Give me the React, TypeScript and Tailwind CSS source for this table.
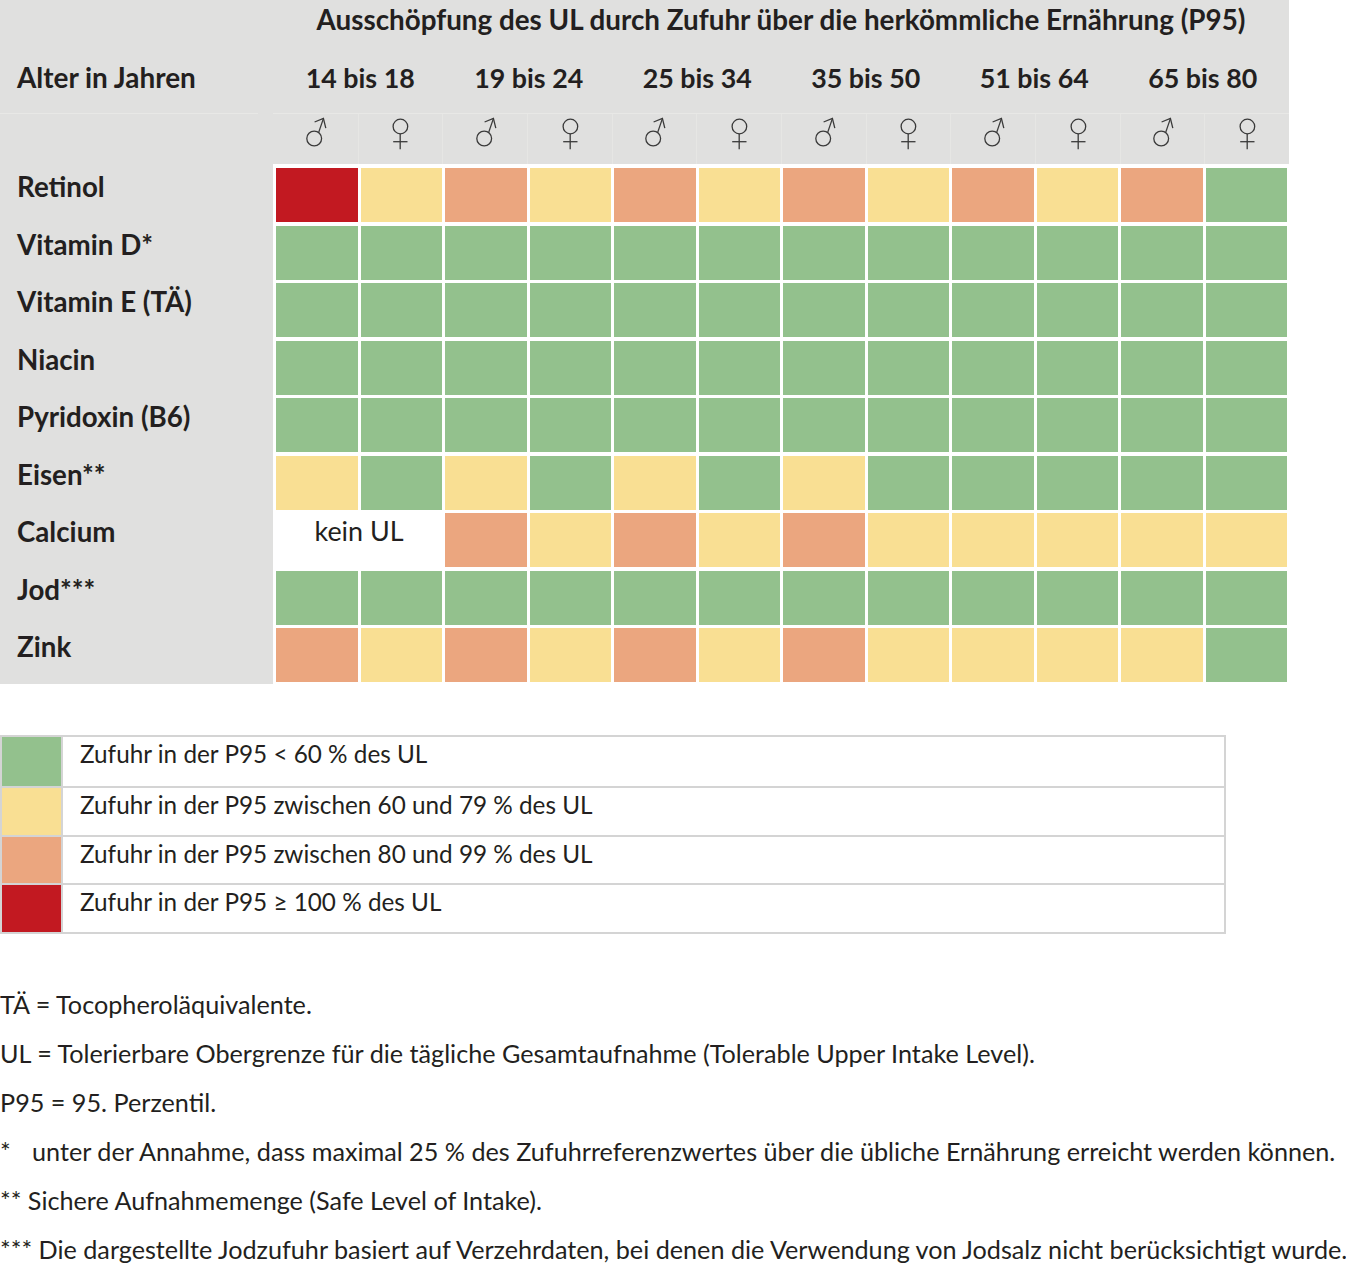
import React from 'react'

type Level = 'G' | 'Y' | 'O' | 'R'

const CELL_BG: Record<Level, string> = {
  G: 'bg-[#93c18d]',
  Y: 'bg-[#f9df93]',
  O: 'bg-[#eba67f]',
  R: 'bg-[#c21921]',
}

const AGES = ['14 bis 18', '19 bis 24', '25 bis 34', '35 bis 50', '51 bis 64', '65 bis 80']

const ROWS: { label: string; cells: Level[]; noUL?: boolean }[] = [
  { label: 'Retinol', cells: ['R', 'Y', 'O', 'Y', 'O', 'Y', 'O', 'Y', 'O', 'Y', 'O', 'G'] },
  { label: 'Vitamin D*', cells: Array(12).fill('G') },
  { label: 'Vitamin E (TÄ)', cells: Array(12).fill('G') },
  { label: 'Niacin', cells: Array(12).fill('G') },
  { label: 'Pyridoxin (B6)', cells: Array(12).fill('G') },
  { label: 'Eisen**', cells: ['Y', 'G', 'Y', 'G', 'Y', 'G', 'Y', 'G', 'G', 'G', 'G', 'G'] },
  { label: 'Calcium', cells: ['O', 'Y', 'O', 'Y', 'O', 'Y', 'Y', 'Y', 'Y', 'Y'], noUL: true },
  { label: 'Jod***', cells: Array(12).fill('G') },
  { label: 'Zink', cells: ['O', 'Y', 'O', 'Y', 'O', 'Y', 'O', 'Y', 'Y', 'Y', 'Y', 'G'] },
]

const LEGEND: { level: Level; text: string }[] = [
  { level: 'G', text: 'Zufuhr in der P95 < 60 % des UL' },
  { level: 'Y', text: 'Zufuhr in der P95 zwischen 60 und 79 % des UL' },
  { level: 'O', text: 'Zufuhr in der P95 zwischen 80 und 99 % des UL' },
  { level: 'R', text: 'Zufuhr in der P95 ≥ 100 % des UL' },
]

function Male() {
  return (
    <svg width="32" height="34" viewBox="0 0 32 34" fill="none" stroke="#3a3a3a" strokeWidth="1.3">
      <circle cx="15.2" cy="21.5" r="7.4" />
      <path d="M19.6 15.6 L24.4 1.6" />
      <path d="M15.6 5 L24.4 1.4 L26.8 11.2" />
    </svg>
  )
}

function Female() {
  return (
    <svg width="32" height="34" viewBox="0 0 32 34" fill="none" stroke="#3a3a3a" strokeWidth="1.3">
      <circle cx="16.4" cy="9.5" r="7.3" />
      <path d="M16.2 16.8 V32.3" />
      <path d="M9.2 24.7 H23.5" />
    </svg>
  )
}

export default function App() {
  return (
    <div className="w-[1346px] bg-white text-[#231f20] [font-family:Lato,sans-serif]">
      {/* header */}
      <div className="flex w-[1289px] h-[164px] bg-[#e0e0df]">
        <div className="w-[273px] flex flex-col">
          <div className="h-[45px]" />
          <div className="h-[68px] flex items-center pl-[17px] pb-[3px] text-[27.9px] font-bold">Alter in Jahren</div>
          <div className="flex-1 border-t border-[#e8e8e6] mr-[15px]" />
        </div>
        <div className="flex-1 flex flex-col">
          <div className="h-[45px] flex items-center justify-center pb-[6px] text-[27.8px] font-bold whitespace-nowrap">
            Ausschöpfung des UL durch Zufuhr über die herkömmliche Ernährung (P95)
          </div>
          <div className="h-[68px] grid grid-cols-6 pl-[3px] pr-[2px] pb-[2px] items-center">
            {AGES.map(a => (
              <div key={a} className="text-center text-[26.8px] font-bold">{a}</div>
            ))}
          </div>
          <div className="flex-1 grid grid-cols-12 border-t border-[#e8e8e6]">
            {AGES.flatMap(a => [
              <div key={a + 'm'} className="flex justify-center pt-[3px] border-l border-[#e6e6e4] first:border-l-0">
                <Male />
              </div>,
              <div key={a + 'f'} className="flex justify-center pt-[3px] border-l border-[#e6e6e4]">
                <Female />
              </div>,
            ])}
          </div>
        </div>
      </div>

      {/* body */}
      <div className="flex w-[1289px]">
        <div className="w-[273px] bg-[#e0e0df] pt-[4px] pb-[2px] flex flex-col gap-[3.5px]">
          {ROWS.map(r => (
            <div key={r.label} className="h-[54px] pl-[17px] pt-[3px] text-[27.7px] leading-[32px] font-bold">
              {r.label}
            </div>
          ))}
        </div>
        <div className="flex-1 bg-white pl-[3px] pr-[2px] pt-[4px] pb-[2px] grid grid-cols-12 gap-x-[3px] gap-y-[3.5px] auto-rows-[54px]">
          {ROWS.flatMap(r => {
            const cells = r.cells.map((c, j) => <div key={r.label + j} className={CELL_BG[c]} />)
            if (r.noUL) {
              return [
                <div key={r.label + 'kein'} className="col-span-2 bg-white text-center text-[26.9px] leading-[32px] pt-[2px]">
                  kein UL
                </div>,
                ...cells,
              ]
            }
            return cells
          })}
        </div>
      </div>

      {/* legend */}
      <div className="mt-[51px] w-[1226px] border-2 border-[#d4d4d4]">
        {LEGEND.map((l, i) => (
          <div key={l.level} className={`flex h-[48.75px] ${i > 0 ? 'border-t-2 border-[#d4d4d4]' : ''}`}>
            <div className={`w-[61px] border-r-2 border-[#d4d4d4] ${CELL_BG[l.level]}`} />
            <div className="pl-[17px] pt-[2px] text-[24.3px] leading-[30px]">{l.text}</div>
          </div>
        ))}
      </div>

      {/* notes */}
      <div className="mt-[46px] text-[25.2px] leading-[49px] whitespace-nowrap">
        <p>TÄ = Tocopheroläquivalente.</p>
        <p>UL = Tolerierbare Obergrenze für die tägliche Gesamtaufnahme (Tolerable Upper Intake Level).</p>
        <p>P95 = 95. Perzentil.</p>
        <p>
          <span className="inline-block w-[32px]">*</span>unter der Annahme, dass maximal 25 % des Zufuhrreferenzwertes über die übliche Ernährung erreicht werden können.
        </p>
        <p>** Sichere Aufnahmemenge (Safe Level of Intake).</p>
        <p>*** Die dargestellte Jodzufuhr basiert auf Verzehrdaten, bei denen die Verwendung von Jodsalz nicht berücksichtigt wurde.</p>
      </div>
    </div>
  )
}
